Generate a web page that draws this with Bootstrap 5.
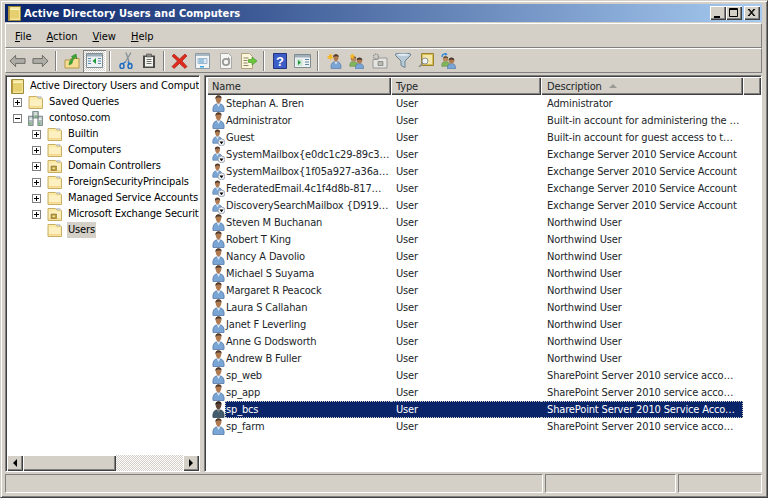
<!DOCTYPE html>
<html lang="en">
<head>
<meta charset="UTF-8">
<meta name="viewport" content="width=device-width, initial-scale=1">
<title>Active Directory Users and Computers</title>
<link href="https://cdn.jsdelivr.net/npm/bootstrap@5.3.0/dist/css/bootstrap.min.css" rel="stylesheet">
<style>
html, body { height: 498px; overflow: hidden; }
body { background: #d4d0c8; font: 11px/16px "DejaVu Sans Condensed", "Liberation Sans", Arial, sans-serif; color: #000; letter-spacing: -.15px; }
.win { width: 768px; height: 498px; padding: 4px 5px 4px 4px; border: 1px solid; border-color: #d4d0c8 #404040 #404040 #d4d0c8; box-shadow: inset 1px 1px 0 #fff, inset -1px -1px 0 #808080; }
.titlebar { height: 18px; margin-top: -1px; flex: none; padding: 0 2px 0 3px; background: linear-gradient(90deg, #0a246a, #a6caf0); color: #fff; font-weight: 700; font-size: 11px; letter-spacing: .08px; }
.titlebar svg { margin-right: 3px; }
.titletext { padding-top: 2px; }
.capbtn { width: 16px; height: 14px; background: #d4d0c8; box-shadow: inset 1px 1px 0 #fff, inset -1px -1px 0 #404040, inset -2px -2px 0 #808080; }
.capbtn svg { margin: 0; }
.capclose { margin-left: 2px; }
.menubar { height: 25px; flex: none; margin-top: 1px; padding: 3px 0 0 5px; border: 1px solid; border-color: #fff #808080 #808080 #fff; letter-spacing: 0; }
.menubar span { padding: 0 4px; margin-right: 7px; }
.menubar u { text-decoration-thickness: 1px; }
.toolband { height: 25px; flex: none; border: 1px solid; border-color: #fff #808080 #808080 #fff; }
.tbi { display: flex; width: 23px; height: 22px; align-items: center; justify-content: center; flex: none; }
.tbi.on { background: repeating-conic-gradient(#d4d0c8 0 25%, #fff 0 50%) 0 0/2px 2px; box-shadow: inset 1px 1px 0 #808080, inset -1px -1px 0 #fff; }
.tbsep { width: 2px; height: 20px; flex: none; margin: 0 3px; background: #808080; border-right: 1px solid #fff; }
.panes { flex: 1 1 auto; min-height: 0; margin-top: 2px; gap: 4px; }
.treepane { width: 195px; flex: none; background: #fff; border: 1px solid; border-color: #808080 #fff #fff #808080; box-shadow: inset 1px 1px 0 #404040; }
.treescroll { flex: 1 1 auto; overflow: hidden; padding: 2px 0 0 7px; white-space: nowrap; }
.treerow { height: 16px; display: flex; align-items: center; }
.treerow svg { flex: none; }
.treeroot { margin-left: -2px; }
.treechild { margin-left: 19px; }
.treeleaf { margin-left: 34px; }
.exp { width: 9px; height: 9px; flex: none; margin-right: 6px; border: 1px solid #808080; background: #fff; position: relative; }
.exp::before { content: ""; position: absolute; left: 1px; right: 1px; top: 3px; height: 1px; background: #000; }
.exp.plus::after { content: ""; position: absolute; top: 1px; bottom: 1px; left: 3px; width: 1px; background: #000; }
.treelabel { padding: 0 1px; margin-left: 5px; }
.treelabel.cur { background: #d4d0c8; }
.hscroll { height: 16px; flex: none; margin: 0 0 0 1px; background: repeating-conic-gradient(#d4d0c8 0 25%, #fff 0 50%) 0 0/2px 2px; }
.sbbtn { background: #d4d0c8; box-shadow: inset 1px 1px 0 #fff, inset -1px -1px 0 #404040, inset -2px -2px 0 #808080; height: 16px; flex: none; }
.listpane { flex: 1 1 auto; background: #fff; border: 1px solid; border-color: #808080 #fff #fff #808080; box-shadow: inset 1px 1px 0 #404040; padding: 1px 0 0 1px; min-width: 0; overflow: hidden; }
.adtable { table-layout: fixed; width: 536px; margin: 0 0 0 1px; border-collapse: separate; border-spacing: 0; background: transparent; --bs-table-bg: transparent; }
.adtable th { font-weight: 400; height: 18px; padding: 0 5px; background: #d4d0c8; box-shadow: inset 1px 1px 0 #fff, inset -1px -1px 0 #404040, inset -2px -2px 0 #808080; }
.adtable td { height: 17px; padding: 0 0 0 1px; white-space: nowrap; overflow: hidden; line-height: 17px; }
.adtable td.tx { padding-left: 5px; }
.adtable td.dsc, .adtable th.dsc { padding-left: 6px; }
.adtable td.ico { padding: 0 0 0 5px; }
.adtable td svg { display: block; }
.adtable tr.sel td:not(.ico) { background: #0a246a; color: #fff; border-top: 1px dotted #d4d0c8; border-bottom: 1px dotted #d4d0c8; line-height: 15px; }
.adtable tr.sel td.txt1 { border-left: 1px dotted #d4d0c8; padding-left: 0; }
.adtable tr.sel td.dsc { border-right: 1px dotted #d4d0c8; }
.adtable tr.sel td.ico svg { filter: brightness(.55) saturate(.8) hue-rotate(-10deg); }
.headfill { position: absolute; left: 538px; right: 0; top: 1px; height: 18px; }
.sortarrow { display: inline-block; width: 0; height: 0; margin-left: 4px; vertical-align: 2px; border: 4px solid transparent; border-top: 0; border-bottom: 4px solid #9c9a94; }
.statusbar { height: 19px; flex: none; margin-top: 2px; gap: 2px; }
.stat { border: 1px solid; border-color: #808080 #fff #fff #808080; }
</style>
</head>
<body>
<svg width="0" height="0" class="d-block position-absolute">
<defs>
<symbol id="user" viewBox="0 0 13 17">
<path d="M1 16.500c-.6-3.500.4-6.500 3-7.500l5 0c2.600 1 3.600 4 3 7.500z" fill="#7aa6d6" stroke="#4a6d9c" stroke-width=".7"/>
<path d="M4.800 9l1.700 3 1.700-3z" fill="#d8e6f4"/>
<path d="M3.600 3.400c0-2 1.200-3 2.900-3s2.900 1 2.900 3c0 2.300-1.200 5-2.900 5s-2.900-2.700-2.900-5z" fill="#b07a50"/>
<path d="M3.400 4c-.2-2.600 1.300-3.800 3.100-3.800s3.200 1 3.100 3.300c-1-1.400-4.700-1.500-6.200.5z" fill="#4e3a2c"/>
</symbol>
<symbol id="dis" viewBox="0 0 13 17">
<use href="#user" width="11" height="15"/>
<circle cx="9.500" cy="13.400" r="3.400" fill="#f2f4f6" stroke="#7f8ca0" stroke-width=".7"/>
<path d="M7.500 12.400h4l-2 2.800z" fill="#000"/>
</symbol>
<symbol id="folder" viewBox="0 0 15 15">
<path d="M1 3.500V1.500h7.500l1.500 1.500h3.800l.7.700V13.500H1z" fill="#fbe9a6" stroke="#c9ad62" stroke-width="1"/>
<path d="M2 4.500h11.500V12.500H2z" fill="#fdf0c0"/>
<path d="M2 11h11.500v1.500H2z" fill="#f2d98c"/>
<path d="M9.500 1.500h3.500v1.300H10z" fill="#eaf0f6" stroke="#a0a8b0" stroke-width=".5"/>
</symbol>
<symbol id="folderou" viewBox="0 0 15 15">
<use href="#folder" width="15" height="15"/>
<path d="M4 7h5.500v4.500H4z" fill="#b89a3e" stroke="#8a7028" stroke-width=".6"/>
<path d="M5.500 8.500h2.500v1.500H5.500z" fill="#efe0a0"/>
</symbol>
<symbol id="domain" viewBox="0 0 16 16">
<path d="M5 .5h6v7H5zM.5 5.500h5v10h-5zM10.500 5.500h5v10h-5z" fill="#aebaba" stroke="#667474" stroke-width=".8"/>
<path d="M6.500 2h3M6.500 3.500h3M1.500 7.500h3M1.500 9h3M11.500 7.500h3M11.500 9h3" stroke="#f4f6f6"/>
<path d="M1.500 12.500h1.500V14H1.500zM11.500 12.500h1.500V14h-1.500zM7.500 5H9v1.500H7.500z" fill="#56c23c"/>
</symbol>
<symbol id="snapin" viewBox="0 0 13 15">
<path d="M.5.500h12v14H.5z" fill="#f4e49a" stroke="#9c8a3c"/>
<path d="M2 2.500h9v10H2z" fill="#e6cf6e"/>
<path d="M2 2.500h9v1.500H2z" fill="#fff6c4"/>
<path d="M.5.500h1.500v14H.5z" fill="#b89a3e"/>
</symbol>
<symbol id="staruser" viewBox="0 0 16 16">
<use href="#user" x="4" y="1" width="12" height="15"/>
<path d="M4 0l.8 2.300L7.200 1.500 5.800 3.800 8 5 5.500 5.200 5 7.800 3.800 5.600 1.300 6.600 2.700 4.500.500 3.200 3 3z" fill="#f6b71e"/>
</symbol>
<symbol id="pair" viewBox="0 0 16 16">
<g transform="translate(0 1) scale(.82)"><path d="M1 15c-.4-2.600.4-5 2.600-5.600h4C9.800 10 10.600 12.400 10.200 15z" fill="#7fb65a" stroke="#54803a" stroke-width=".6"/><circle cx="5.600" cy="6" r="3.200" fill="#b88a5c"/><path d="M2.400 5.600c0-4 6.400-4 6.400 0-1.600-1.200-4.800-1.200-6.400 0z" fill="#5b4a36"/></g>
<g transform="translate(6 4)"><path d="M.6 12c-.4-2.600.4-4.800 2.400-5.300h3C8 7.200 8.800 9.400 8.400 12z" fill="#7aa6d6" stroke="#4a6d9c" stroke-width=".6"/><circle cx="4.500" cy="3.600" r="2.800" fill="#b07a50"/><path d="M1.700 3.300c0-3.600 5.600-3.600 5.600 0-1.500-1-4-1-5.600 0z" fill="#46362a"/></g>
</symbol>
</defs>
</svg>

<div class="win d-flex flex-column">
  <div class="titlebar d-flex align-items-center">
    <svg width="13" height="15"><use href="#snapin"/></svg>
    <span class="flex-grow-1 titletext">Active Directory Users and Computers</span>
    <span class="capbtn d-flex justify-content-center"><svg width="16" height="14"><path d="M4 10h6v2H4z" fill="#000"/></svg></span>
    <span class="capbtn d-flex justify-content-center"><svg width="16" height="14"><path d="M3.500 2.500h8v8h-8zM3.500 3.500h8" fill="none" stroke="#000"/></svg></span>
    <span class="capbtn capclose d-flex justify-content-center"><svg width="16" height="14"><path d="M4 3l6 7M10 3l-6 7M5 3l6 7M11 3l-6 7" stroke="#000" fill="none"/></svg></span>
  </div>

  <div class="menubar d-flex align-items-center">
    <span><u>F</u>ile</span><span><u>A</u>ction</span><span><u>V</u>iew</span><span><u>H</u>elp</span>
  </div>

  <div class="toolband d-flex align-items-center">
    <div class="tbi"><svg width="17" height="14" viewBox="0 0 18 14"><path d="M1 7l6-6v3.500h10v5H7V13z" fill="#aeaca6" stroke="#68685f"/></svg></div>
    <div class="tbi"><svg width="17" height="14" viewBox="0 0 18 14"><path d="M17 7l-6-6v3.500H1v5h10V13z" fill="#aeaca6" stroke="#68685f"/></svg></div>
    <div class="tbsep"></div>
    <div class="tbi"><svg width="16" height="16" viewBox="0 0 16 16"><path d="M1 7h5l1-1.500h8V15H1z" fill="#f6dd92" stroke="#b99a4c"/><path d="M5 12c0-4 2-6 4-7L7.500 3.500 12 1l1 5-1.500-1.500c-1.500 1-3 2.500-3.500 6z" fill="#3fa535" stroke="#1f7a20" stroke-width=".5"/></svg></div>
    <div class="tbi on"><svg width="17" height="15" viewBox="0 0 17 15"><path d="M.5.500h16v14H.5z" fill="#eef1f4" stroke="#7d8c92"/><path d="M1 1h15v2.500H1z" fill="#9eafba"/><path d="M2 5h3v1H2zM2 7.500h3v1H2zM2 10h3v1H2zM12 5h3v1h-3zM12 7.500h3v1h-3zM12 10h3v1h-3z" fill="#5a8aa8"/><path d="M10 5v6L6.500 8z" fill="#1f9a3a"/></svg></div>
    <div class="tbsep"></div>
    <div class="tbi"><svg width="14" height="17" viewBox="0 0 14 17"><path d="M11 .5L6 9M6 .5l3 9" stroke="#8a949c" stroke-width="1.400" fill="none" transform="translate(1 0)"/><path d="M7 9.500L3.500 12M9 9.500l2 3" stroke="#2f78c8" stroke-width="1.500"/><ellipse cx="3" cy="14" rx="2" ry="2.600" fill="none" stroke="#1f6cc0" stroke-width="1.500"/><ellipse cx="11" cy="14" rx="2" ry="2.600" fill="none" stroke="#1f6cc0" stroke-width="1.500"/></svg></div>
    <div class="tbi"><svg width="14" height="15" viewBox="0 0 14 15"><path d="M1 2.500h12V15H1z" fill="#4c4a46"/><path d="M3 4h8v9.500H3z" fill="#f4f4f0"/><path d="M4.500 1h5v3h-5z" fill="#8c8a84" stroke="#4c4a46" stroke-width=".6"/><path d="M4.500 6.500h5M4.500 8.500h5M4.500 10.500h5" stroke="#6c6c68"/></svg></div>
    <div class="tbsep"></div>
    <div class="tbi"><svg width="17" height="16" viewBox="0 0 17 16"><path d="M1 3l2-2 5.500 5L14 1l2 2-5 5 5 5.500L14 15.500 8.500 10.500 3 15.500 1 13.500l5.500-5.500z" fill="#e02a1e" stroke="#a01a10" stroke-width=".6"/></svg></div>
    <div class="tbi"><svg width="15" height="16" viewBox="0 0 15 16"><path d="M.5.500h14v15H.5z" fill="#f2f4f6" stroke="#8e9ca6"/><path d="M1 1h13v2H1z" fill="#a8b8c4"/><path d="M3 5.500h9v5H3z" fill="#dbe8f2" stroke="#9cb8cc"/><path d="M4 7h5M4 9h5" stroke="#5a9ac8"/><path d="M5 13h4v1.500H5z" fill="#35a4e0"/></svg></div>
    <div class="tbi"><svg width="14" height="16" viewBox="0 0 14 16"><path d="M1.500.500h8l3 3v12h-11z" fill="#f5f5f3" stroke="#a8a8a4"/><circle cx="7" cy="9" r="3.200" fill="none" stroke="#9a9a96" stroke-width="1.800"/><path d="M9.500 3.800l1.800 3-3.200.3z" fill="#9a9a96"/></svg></div>
    <div class="tbi"><svg width="17" height="16" viewBox="0 0 17 16"><path d="M1.500.500h8l3 3v12h-11z" fill="#fcf6dc" stroke="#b0a27a"/><path d="M3.500 5h5M3.500 7.500h4M3.500 10h4M3.500 12.500h5" stroke="#8c8468"/><path d="M8.500 6.500h3.500V4l5 4-5 4V9.500H8.500z" fill="#6cc83c" stroke="#3a8a20" stroke-width=".6"/></svg></div>
    <div class="tbsep"></div>
    <div class="tbi"><svg width="14" height="16" viewBox="0 0 14 16"><path d="M.5.500h13v15H.5z" fill="#3c5cc8" stroke="#24347c"/><text x="7" y="12.500" text-anchor="middle" fill="#fff" font-family="Liberation Sans" font-weight="700" font-size="13">?</text></svg></div>
    <div class="tbi"><svg width="17" height="14" viewBox="0 0 17 14"><path d="M.5.500h16v13H.5z" fill="#f0f2f2" stroke="#7e8c92"/><path d="M1 1h15v2.500H1z" fill="#9eafba"/><path d="M2.500 5h6v7h-6z" fill="#cfe6d8"/><path d="M4 6l3 2.500L4 11z" fill="#1f9a3a"/><path d="M11 5.500h4M11 8h4M11 10.500h4" stroke="#5a8aa8"/></svg></div>
    <div class="tbsep"></div>
    <div class="tbi"><svg width="16" height="16"><use href="#staruser"/></svg></div>
    <div class="tbi"><svg width="16" height="16" viewBox="0 0 16 16"><use href="#pair"/><path d="M3 0l.7 2 2-.7-1 1.900 1.800 1-2 .3-.5 2.100-1-1.900-2 .8 1-1.700L.5 2.500l2-.3z" fill="#f6b71e"/></svg></div>
    <div class="tbi"><svg width="16" height="16" viewBox="0 0 16 16"><path d="M1 6.500h5l1-1.500h8v10H1z" fill="#e4e4e0" stroke="#98989a"/><path d="M6 8.500h5v4H6z" fill="#b8b8b4" stroke="#6c6c6c" stroke-width=".6"/><circle cx="4" cy="3.500" r="2.400" fill="none" stroke="#9a9a9a" stroke-width="1.600" stroke-dasharray="1.200 .6"/></svg></div>
    <div class="tbi"><svg width="16" height="15" viewBox="0 0 16 15"><path d="M.5 1c3-1.200 12-1.200 15 0v1.500L10 8v6.500L6 12.500V8L.5 2.500z" fill="#b8cad6" stroke="#6c8292"/><ellipse cx="8" cy="1.800" rx="6" ry="1" fill="#e4edf2"/></svg></div>
    <div class="tbi"><svg width="16" height="15" viewBox="0 0 16 15"><path d="M3.500.500h12v12h-12z" fill="#d8bc56" stroke="#9a8430"/><path d="M5 2h9v9H5z" fill="#f2e6a8"/><circle cx="7" cy="8" r="3" fill="#eef4f6" stroke="#8c9094"/><path d="M4.800 10.300L1 14" stroke="#8c8c84" stroke-width="1.600"/></svg></div>
    <div class="tbi"><svg width="16" height="16" viewBox="0 0 16 16"><use href="#pair"/><path d="M1 4c0-2.500 2-3.500 4-3" fill="none" stroke="#2c86d8" stroke-width="1.300"/><path d="M4 -.5l2.500 1.500L4.500 3z" fill="#2c86d8"/></svg></div>
  </div>

  <div class="panes d-flex">
    <div class="treepane d-flex flex-column">
      <div class="treescroll">
        <div class="treerow treeroot"><svg width="13" height="15"><use href="#snapin"/></svg><span class="treelabel">Active Directory Users and Computers</span></div>
        <div class="treerow"><span class="exp plus"></span><svg width="15" height="15"><use href="#folder"/></svg><span class="treelabel">Saved Queries</span></div>
        <div class="treerow"><span class="exp"></span><svg width="15" height="15"><use href="#domain"/></svg><span class="treelabel">contoso.com</span></div>
        <div class="treerow treechild"><span class="exp plus"></span><svg width="15" height="15"><use href="#folder"/></svg><span class="treelabel">Builtin</span></div>
        <div class="treerow treechild"><span class="exp plus"></span><svg width="15" height="15"><use href="#folder"/></svg><span class="treelabel">Computers</span></div>
        <div class="treerow treechild"><span class="exp plus"></span><svg width="15" height="15"><use href="#folderou"/></svg><span class="treelabel">Domain Controllers</span></div>
        <div class="treerow treechild"><span class="exp plus"></span><svg width="15" height="15"><use href="#folder"/></svg><span class="treelabel">ForeignSecurityPrincipals</span></div>
        <div class="treerow treechild"><span class="exp plus"></span><svg width="15" height="15"><use href="#folder"/></svg><span class="treelabel">Managed Service Accounts</span></div>
        <div class="treerow treechild"><span class="exp plus"></span><svg width="15" height="15"><use href="#folderou"/></svg><span class="treelabel">Microsoft Exchange Security Groups</span></div>
        <div class="treerow treeleaf"><svg width="15" height="15"><use href="#folder"/></svg><span class="treelabel cur">Users</span></div>
      </div>
      <div class="hscroll d-flex">
        <div class="sbbtn d-flex align-items-center justify-content-center" style="width:16px"><svg width="6" height="8"><path d="M5 0v8L1 4z"/></svg></div>
        <div class="sbbtn" style="width:93px"></div>
        <div class="flex-grow-1"></div>
        <div class="sbbtn d-flex align-items-center justify-content-center" style="width:16px"><svg width="6" height="8"><path d="M1 0v8l4-4z"/></svg></div>
      </div>
    </div>

    <div class="listpane position-relative">
      <div class="headfill sbbtn"></div>
      <table class="table table-borderless adtable position-relative">
        <colgroup><col style="width:18px"><col style="width:166px"><col style="width:150px"><col style="width:202px"></colgroup>
        <thead><tr><th colspan="2">Name</th><th>Type</th><th class="dsc">Description <span class="sortarrow"></span></th></tr></thead>
        <tbody>
          <tr><td class="ico"><svg width="13" height="17"><use href="#user"/></svg></td><td class="txt1">Stephan A. Bren</td><td class="tx">User</td><td class="tx dsc">Administrator</td></tr>
          <tr><td class="ico"><svg width="13" height="17"><use href="#user"/></svg></td><td class="txt1">Administrator</td><td class="tx">User</td><td class="tx dsc">Built-in account for administering the …</td></tr>
          <tr><td class="ico"><svg width="13" height="17"><use href="#dis"/></svg></td><td class="txt1">Guest</td><td class="tx">User</td><td class="tx dsc">Built-in account for guest access to t…</td></tr>
          <tr><td class="ico"><svg width="13" height="17"><use href="#dis"/></svg></td><td class="txt1">SystemMailbox{e0dc1c29-89c3…</td><td class="tx">User</td><td class="tx dsc">Exchange Server 2010 Service Account</td></tr>
          <tr><td class="ico"><svg width="13" height="17"><use href="#dis"/></svg></td><td class="txt1">SystemMailbox{1f05a927-a36a…</td><td class="tx">User</td><td class="tx dsc">Exchange Server 2010 Service Account</td></tr>
          <tr><td class="ico"><svg width="13" height="17"><use href="#dis"/></svg></td><td class="txt1">FederatedEmail.4c1f4d8b-817…</td><td class="tx">User</td><td class="tx dsc">Exchange Server 2010 Service Account</td></tr>
          <tr><td class="ico"><svg width="13" height="17"><use href="#dis"/></svg></td><td class="txt1">DiscoverySearchMailbox {D919…</td><td class="tx">User</td><td class="tx dsc">Exchange Server 2010 Service Account</td></tr>
          <tr><td class="ico"><svg width="13" height="17"><use href="#user"/></svg></td><td class="txt1">Steven M Buchanan</td><td class="tx">User</td><td class="tx dsc">Northwind User</td></tr>
          <tr><td class="ico"><svg width="13" height="17"><use href="#user"/></svg></td><td class="txt1">Robert T King</td><td class="tx">User</td><td class="tx dsc">Northwind User</td></tr>
          <tr><td class="ico"><svg width="13" height="17"><use href="#user"/></svg></td><td class="txt1">Nancy A Davolio</td><td class="tx">User</td><td class="tx dsc">Northwind User</td></tr>
          <tr><td class="ico"><svg width="13" height="17"><use href="#user"/></svg></td><td class="txt1">Michael S Suyama</td><td class="tx">User</td><td class="tx dsc">Northwind User</td></tr>
          <tr><td class="ico"><svg width="13" height="17"><use href="#user"/></svg></td><td class="txt1">Margaret R Peacock</td><td class="tx">User</td><td class="tx dsc">Northwind User</td></tr>
          <tr><td class="ico"><svg width="13" height="17"><use href="#user"/></svg></td><td class="txt1">Laura S Callahan</td><td class="tx">User</td><td class="tx dsc">Northwind User</td></tr>
          <tr><td class="ico"><svg width="13" height="17"><use href="#user"/></svg></td><td class="txt1">Janet F Leverling</td><td class="tx">User</td><td class="tx dsc">Northwind User</td></tr>
          <tr><td class="ico"><svg width="13" height="17"><use href="#user"/></svg></td><td class="txt1">Anne G Dodsworth</td><td class="tx">User</td><td class="tx dsc">Northwind User</td></tr>
          <tr><td class="ico"><svg width="13" height="17"><use href="#user"/></svg></td><td class="txt1">Andrew B Fuller</td><td class="tx">User</td><td class="tx dsc">Northwind User</td></tr>
          <tr><td class="ico"><svg width="13" height="17"><use href="#user"/></svg></td><td class="txt1">sp_web</td><td class="tx">User</td><td class="tx dsc">SharePoint Server 2010 service acco…</td></tr>
          <tr><td class="ico"><svg width="13" height="17"><use href="#user"/></svg></td><td class="txt1">sp_app</td><td class="tx">User</td><td class="tx dsc">SharePoint Server 2010 service acco…</td></tr>
          <tr class="sel"><td class="ico"><svg width="13" height="17"><use href="#user"/></svg></td><td class="txt1">sp_bcs</td><td class="tx">User</td><td class="tx dsc">SharePoint Server 2010 Service Acco…</td></tr>
          <tr><td class="ico"><svg width="13" height="17"><use href="#user"/></svg></td><td class="txt1">sp_farm</td><td class="tx">User</td><td class="tx dsc">SharePoint Server 2010 service acco…</td></tr>
        </tbody>
      </table>
    </div>
  </div>

  <div class="statusbar d-flex">
    <div class="stat flex-grow-1"></div>
    <div class="stat" style="width:131px"></div>
    <div class="stat" style="width:84px"></div>
  </div>
</div>
</body>
</html>
